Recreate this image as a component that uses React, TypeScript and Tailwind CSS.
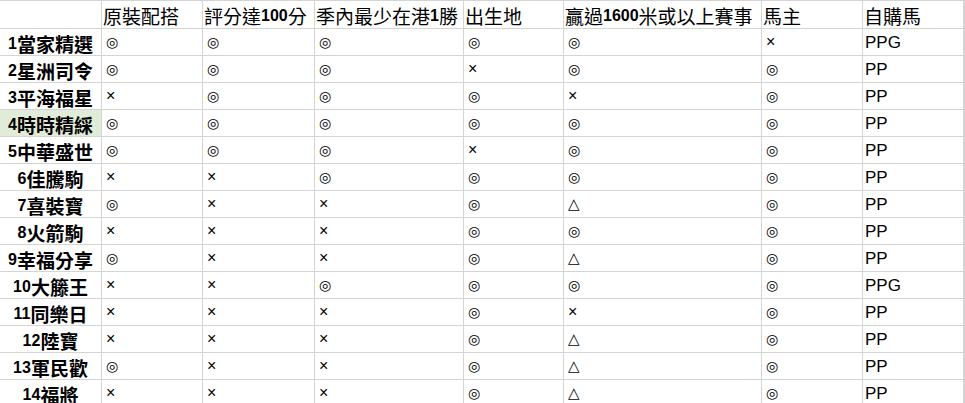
import type { ReactNode } from 'react';

const cols = ['原裝配搭', '評分達100分', '季內最少在港1勝', '出生地', '贏過1600米或以上賽事', '馬主', '自購馬'];

// label, then one mark per column, then the last text column
const rows: [string, string, string][] = [
  ['1當家精選', 'OOOOOX', 'PPG'],
  ['2星洲司令', 'OOOXOO', 'PP'],
  ['3平海福星', 'XOOOXO', 'PP'],
  ['4時時精綵', 'OOOOOO', 'PP'],
  ['5中華盛世', 'OOOXOO', 'PP'],
  ['6佳騰駒', 'XXOOOO', 'PP'],
  ['7喜裝寶', 'OXXOTO', 'PP'],
  ['8火箭駒', 'XXXOOO', 'PP'],
  ['9幸福分享', 'OXXOTO', 'PP'],
  ['10大籐王', 'XXOOOO', 'PPG'],
  ['11同樂日', 'XXXOXO', 'PP'],
  ['12陸寶', 'XXXOTO', 'PP'],
  ['13軍民歡', 'OXXOTO', 'PP'],
  ['14福將', 'XXXOTO', 'PP'],
];

const latin = "font-['Liberation_Sans',Arial,sans-serif]";
const cjk = "font-['Noto_Sans_CJK_TC','Liberation_Sans',sans-serif]";
const shapes = "font-['DejaVu_Sans','Noto_Sans_CJK_TC',sans-serif]";

// digits come out in Arial bold, CJK in the larger fallback font
function mixed(text: string, boldCjk: boolean): ReactNode[] {
  return text.split(/(\d+)/).filter(Boolean).map((part, i) =>
    /^\d+$/.test(part) ? (
      <span key={i} className={`${latin} text-[16px] font-bold`}>
        {part}
      </span>
    ) : (
      <span key={i} className={`${cjk} text-[19px] ${boldCjk ? 'font-bold' : 'font-normal'}`}>
        {part}
      </span>
    ),
  );
}

function Mark({ m }: { m: string }) {
  if (m === 'X') return <span className={`${latin} text-[16px]`}>×</span>;
  if (m === 'T') return <span className={`${shapes} text-[15px]`}>△</span>;
  return <span className={`${shapes} text-[14px]`}>◎</span>;
}

const cell = 'flex items-end overflow-hidden whitespace-nowrap border-r border-b border-[#d4d4d4] leading-[18px] text-black';

export default function App() {
  return (
    <div className="h-[403px] w-[965px] overflow-hidden bg-white">
      <div className="grid grid-cols-[102px_101px_112px_149px_100px_198px_101px_101px_1fr]">
        <div className={`${cell} h-[29px] border-t`} />
        {cols.map((c) => (
          <div key={c} className={`${cell} h-[29px] border-t pb-[3px] pl-[1px]`}>
            {mixed(c, false)}
          </div>
        ))}
        <div className={`${cell} h-[29px] border-t`} />

        {rows.map(([label, marks, own], r) => (
          <Row key={label} label={label} marks={marks} own={own} selected={r === 3} />
        ))}
      </div>
    </div>
  );
}

function Row({ label, marks, own, selected }: { label: string; marks: string; own: string; selected: boolean }) {
  return (
    <>
      <div className={`${cell} h-[27px] justify-center pb-[2px] ${selected ? 'bg-[#e1ecd8]' : ''}`}>
        {mixed(label, true)}
      </div>
      {marks.split('').map((m, i) => (
        <div key={i} className={`${cell} h-[27px] pb-[4px] pl-[4px]`}>
          <Mark m={m} />
        </div>
      ))}
      <div className={`${cell} h-[27px] pb-[3px] pl-[2px] ${latin} text-[17px]`}>{own}</div>
      <div className={`${cell} h-[27px]`} />
    </>
  );
}
